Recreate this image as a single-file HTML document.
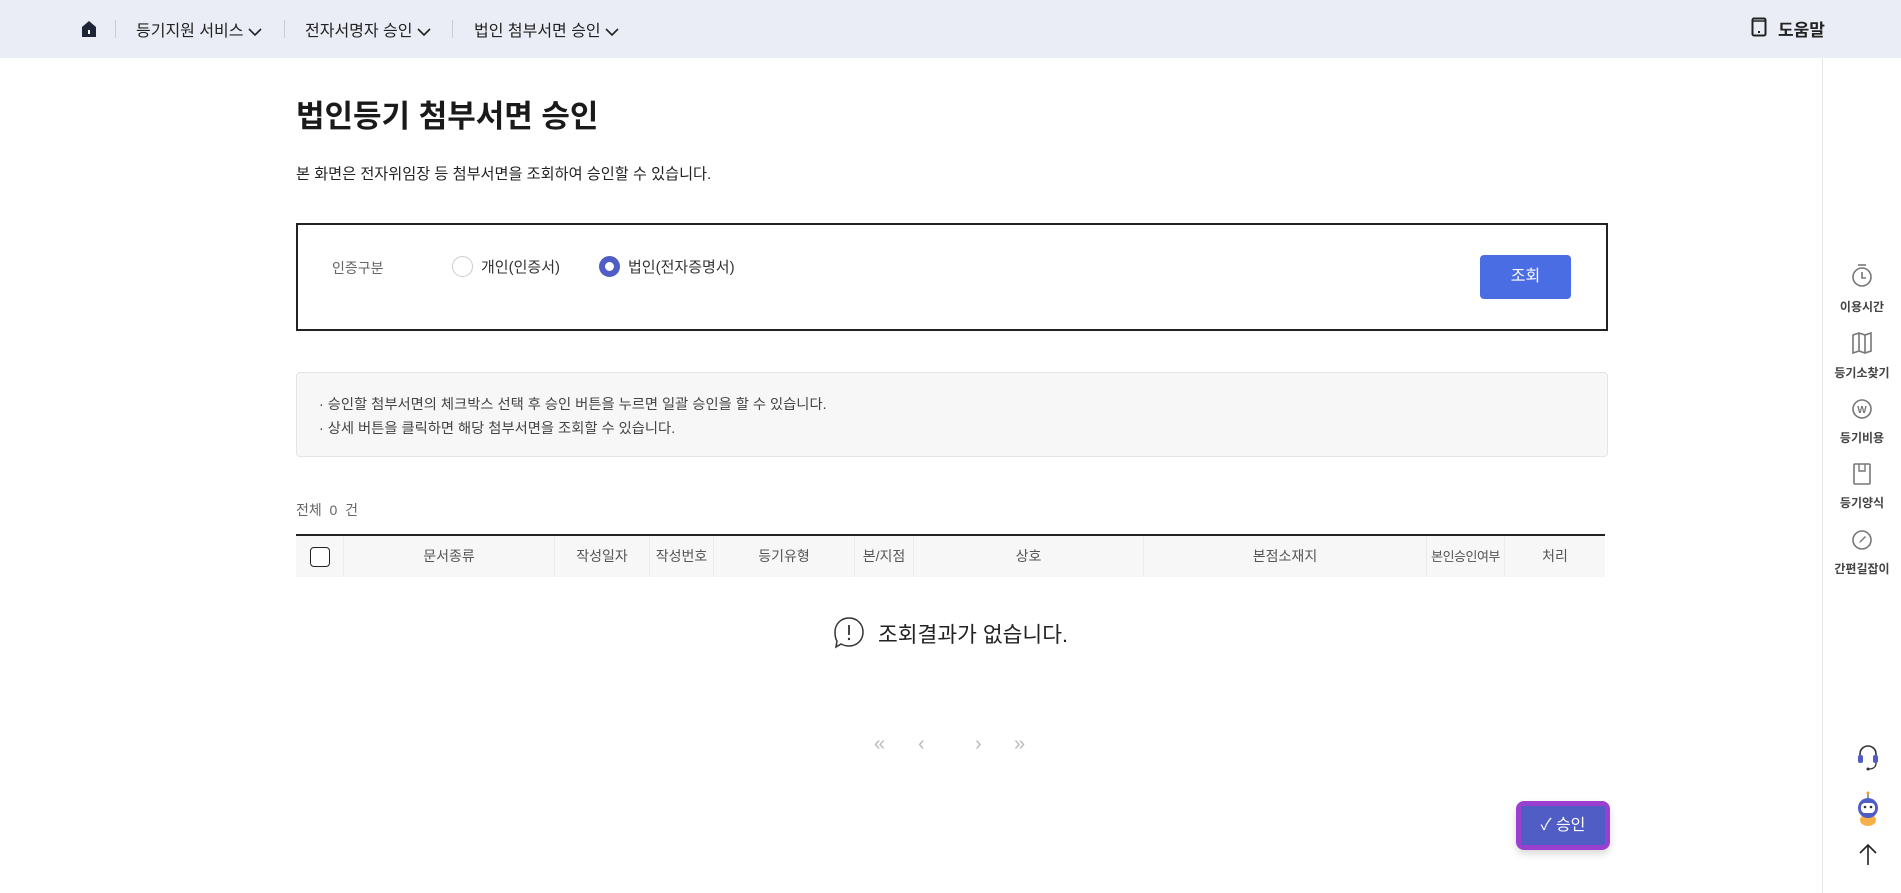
<!DOCTYPE html>
<html><head><meta charset="utf-8"><style>
*{margin:0;padding:0;box-sizing:border-box}
body{width:1901px;height:893px;overflow:hidden;background:#fff;font-family:"Liberation Sans","Noto Sans CJK KR",sans-serif;color:#222;position:relative}
.abs{position:absolute}
.hdr{left:0;top:0;width:1901px;height:58px;background:#eaedf5}
.nav{top:17px;font-size:16px;color:#222;white-space:nowrap}
.sep{top:20px;width:1px;height:18px;background:#c8ccd6}
.side{left:1822px;top:58px;width:1px;height:835px;background:#e6e6e6}
.si{left:1823px;width:78px;text-align:center;font-size:12px;color:#444;font-weight:bold}
.th{position:absolute;top:0;height:41px;line-height:41px;text-align:center;font-size:14px;color:#555;border-right:1px solid #ececec;white-space:nowrap}
.chev{display:inline-block;vertical-align:middle;margin-left:4px}
</style></head><body>
<div class="abs hdr"></div>
<svg class="abs" style="left:80px;top:19px" width="18" height="20" viewBox="0 0 18 20"><path d="M2 8 L9 2 L16 8 V18 H2Z" fill="#1d2536"/><rect x="8" y="11" width="2" height="4" fill="#fff"/></svg>
<div class="abs sep" style="left:115px"></div>
<div class="abs nav" style="left:136px">등기지원 서비스<svg class="chev" width="14" height="10" viewBox="0 0 14 10"><path d="M1 2 L7 8 L13 2" fill="none" stroke="#222" stroke-width="1.6"/></svg></div>
<div class="abs sep" style="left:284px"></div>
<div class="abs nav" style="left:305px">전자서명자 승인<svg class="chev" width="14" height="10" viewBox="0 0 14 10"><path d="M1 2 L7 8 L13 2" fill="none" stroke="#222" stroke-width="1.6"/></svg></div>
<div class="abs sep" style="left:452px"></div>
<div class="abs nav" style="left:474px">법인 첨부서면 승인<svg class="chev" width="14" height="10" viewBox="0 0 14 10"><path d="M1 2 L7 8 L13 2" fill="none" stroke="#222" stroke-width="1.6"/></svg></div>
<svg class="abs" style="left:1751px;top:17px" width="16" height="20" viewBox="0 0 16 20"><rect x="1.5" y="1.5" width="13" height="17" rx="1.5" fill="none" stroke="#222" stroke-width="2"/><line x1="1.5" y1="4" x2="14.5" y2="4" stroke="#222" stroke-width="1.5"/><rect x="7" y="14" width="2" height="2" fill="#222"/></svg>
<div class="abs" style="left:1778px;top:16px;font-size:17px;font-weight:bold">도움말</div>

<div class="abs side"></div>
<svg class="abs" style="left:1851px;top:263px" width="22" height="26" viewBox="0 0 22 26"><circle cx="11" cy="14" r="9" fill="none" stroke="#777" stroke-width="1.6"/><line x1="7" y1="2" x2="15" y2="2" stroke="#777" stroke-width="1.6"/><path d="M11 9 V15 H15" fill="none" stroke="#777" stroke-width="1.6"/></svg>
<div class="abs si" style="top:298px">이용시간</div>
<svg class="abs" style="left:1851px;top:331px" width="22" height="24" viewBox="0 0 22 24"><path d="M2 4 L8 2 L14 4 L20 2 V20 L14 22 L8 20 L2 22Z M8 2 V20 M14 4 V22" fill="none" stroke="#777" stroke-width="1.6"/></svg>
<div class="abs si" style="top:364px">등기소찾기</div>
<svg class="abs" style="left:1851px;top:398px" width="22" height="24" viewBox="0 0 22 24"><circle cx="11" cy="11" r="9" fill="none" stroke="#777" stroke-width="1.6"/><text x="11" y="15" font-size="10" text-anchor="middle" fill="#777" font-family="Liberation Sans" font-weight="bold">W</text></svg>
<div class="abs si" style="top:429px">등기비용</div>
<svg class="abs" style="left:1852px;top:462px" width="20" height="24" viewBox="0 0 20 24"><rect x="2" y="2" width="16" height="20" rx="1" fill="none" stroke="#777" stroke-width="1.6"/><path d="M7 2 V9 H13 V2" fill="none" stroke="#777" stroke-width="1.4"/></svg>
<div class="abs si" style="top:494px">등기양식</div>
<svg class="abs" style="left:1851px;top:529px" width="22" height="22" viewBox="0 0 22 22"><circle cx="11" cy="11" r="9" fill="none" stroke="#777" stroke-width="1.6"/><path d="M14 7 L9 12 L8 14 L10 13 L15 8Z" fill="#777"/></svg>
<div class="abs si" style="top:560px">간편길잡이</div>

<div class="abs" style="left:296px;top:91px;font-size:31px;font-weight:bold;color:#1a1a1a">법인등기 첨부서면 승인</div>
<div class="abs" style="left:296px;top:162px;font-size:15.2px;color:#222">본 화면은 전자위임장 등 첨부서면을 조회하여 승인할 수 있습니다.</div>

<div class="abs" style="left:296px;top:223px;width:1312px;height:108px;border:2px solid #222"></div>
<div class="abs" style="left:332px;top:258px;font-size:14px;color:#666">인증구분</div>
<div class="abs" style="left:452px;top:256px;width:21px;height:21px;border:1px solid #ccc;border-radius:50%"></div>
<div class="abs" style="left:481px;top:256px;font-size:15px;color:#333">개인(인증서)</div>
<div class="abs" style="left:599px;top:256px;width:21px;height:21px;border:6px solid #4f5dc4;border-radius:50%;background:#fff"></div>
<div class="abs" style="left:628px;top:256px;font-size:15px;color:#333">법인(전자증명서)</div>
<div class="abs" style="left:1480px;top:255px;width:91px;height:44px;background:#4b6de3;border-radius:4px;color:#fff;font-size:16px;text-align:center;line-height:44px">조회</div>

<div class="abs" style="left:296px;top:372px;width:1312px;height:85px;background:#f7f7f7;border:1px solid #e4e4e4;border-radius:4px"></div>
<div class="abs" style="left:319px;top:393px;font-size:14.3px;color:#444">· 승인할 첨부서면의 체크박스 선택 후 승인 버튼을 누르면 일괄 승인을 할 수 있습니다.</div>
<div class="abs" style="left:319px;top:417px;font-size:14.3px;color:#444">· 상세 버튼을 클릭하면 해당 첨부서면을 조회할 수 있습니다.</div>

<div class="abs" style="left:296px;top:500px;font-size:14px;color:#666">전체 &nbsp;0 &nbsp;건</div>
<div class="abs" style="left:296px;top:534px;width:1309px;height:2px;background:#222"></div>
<div class="abs" style="left:296px;top:536px;width:1309px;height:41px;background:#f7f7f7">
<div class="th" style="left:0;width:48px"><span style="display:inline-block;width:20px;height:20px;border:1.5px solid #222;border-radius:4px;vertical-align:middle;background:#fff"></span></div>
<div class="th" style="left:48px;width:211px">문서종류</div>
<div class="th" style="left:259px;width:95px">작성일자</div>
<div class="th" style="left:354px;width:64px">작성번호</div>
<div class="th" style="left:418px;width:141px">등기유형</div>
<div class="th" style="left:559px;width:59px">본/지점</div>
<div class="th" style="left:618px;width:230px">상호</div>
<div class="th" style="left:848px;width:283px">본점소재지</div>
<div class="th" style="left:1131px;width:78px;font-size:13px;letter-spacing:-0.5px">본인승인여부</div>
<div class="th" style="left:1209px;width:100px;border-right:none">처리</div>
</div>

<svg class="abs" style="left:832px;top:615px" width="34" height="36" viewBox="0 0 34 36"><path d="M17 3 C25 3 31 9 31 17 C31 25 25 31 17 31 C14 31 11 30 9 29 L4 32 L5 26 C3 23 3 20 3 17 C3 9 9 3 17 3Z" fill="#fff" stroke="#333" stroke-width="1.5"/><line x1="17" y1="10" x2="17" y2="20" stroke="#333" stroke-width="1.8"/><circle cx="17" cy="24" r="1.2" fill="#333"/></svg>
<div class="abs" style="left:878px;top:618px;font-size:21.5px;color:#222">조회결과가 없습니다.</div>

<div class="abs" style="left:874px;top:733px;font-size:20px;color:#bbb">«</div>
<div class="abs" style="left:918px;top:733px;font-size:20px;color:#bbb">‹</div>
<div class="abs" style="left:975px;top:733px;font-size:20px;color:#bbb">›</div>
<div class="abs" style="left:1014px;top:733px;font-size:20px;color:#bbb">»</div>

<div class="abs" style="left:1516px;top:801px;width:94px;height:49px;background:#9b3fd1;border-radius:8px;box-shadow:0 4px 8px rgba(0,0,0,.15);padding:5px">
<div style="width:100%;height:100%;background:#4f5dc4;color:#fff;font-size:16px;text-align:center;line-height:39px">✓ 승인</div></div>

<svg class="abs" style="left:1856px;top:743px" width="24" height="30" viewBox="0 0 24 30"><path d="M4 16 V11 C4 6 8 3 12 3 C16 3 20 6 20 11 V16" fill="none" stroke="#333" stroke-width="1.6"/><rect x="2" y="12" width="5" height="8" rx="2" fill="#4f5dc4"/><rect x="17" y="12" width="5" height="8" rx="2" fill="#4f5dc4"/><path d="M20 20 C20 24 17 26 13 26" fill="none" stroke="#333" stroke-width="1.4"/><circle cx="12" cy="26" r="1.5" fill="#333"/></svg>
<svg class="abs" style="left:1853px;top:790px" width="30" height="38" viewBox="0 0 30 38"><line x1="15" y1="2" x2="15" y2="8" stroke="#333"/><circle cx="15" cy="3" r="1.5" fill="#f0a030"/><ellipse cx="15" cy="30" rx="8" ry="6" fill="#f5b04a"/><circle cx="15" cy="18" r="10" fill="#4f5dc4"/><rect x="8" y="13" width="14" height="10" rx="4" fill="#fff"/><circle cx="12" cy="17" r="1.3" fill="#333"/><circle cx="18" cy="17" r="1.3" fill="#333"/></svg>
<svg class="abs" style="left:1858px;top:843px" width="20" height="24" viewBox="0 0 20 24"><path d="M10 22 V2 M2 10 L10 2 L18 10" fill="none" stroke="#222" stroke-width="1.6"/></svg>
</body></html>
